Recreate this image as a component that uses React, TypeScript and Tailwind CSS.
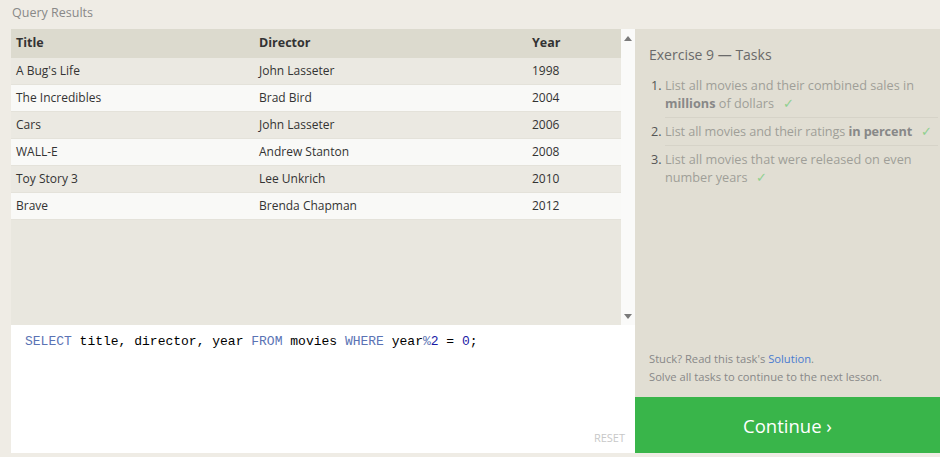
import React from "react";

const rows = [
  ["A Bug's Life", "John Lasseter", "1998"],
  ["The Incredibles", "Brad Bird", "2004"],
  ["Cars", "John Lasseter", "2006"],
  ["WALL-E", "Andrew Stanton", "2008"],
  ["Toy Story 3", "Lee Unkrich", "2010"],
  ["Brave", "Brenda Chapman", "2012"],
];

const Check = () => (
  <span className="inline-block ml-[9px] leading-[18px] text-[#8fd08f]">✓</span>
);

export default function App() {
  return (
    <div
      className="w-[940px] h-[457px] bg-[#efece5] flex flex-col overflow-hidden"
      style={{ fontFamily: '"Open Sans", "Noto Sans", sans-serif' }}
    >
      <div className="h-[29px] pl-[12px] pt-[4px] text-[12.5px] text-[#888] leading-[18px]">
        Query Results
      </div>
      <div className="flex h-[424px]">
        <div className="ml-[11px] w-[624px] flex flex-col">
          <div className="h-[296px] flex">
            <div className="w-[610px] bg-[#e9e7df]">
              <div className="flex h-[29px] items-center bg-[#dcdace] text-[12.5px] font-bold text-[#333]">
                <div className="w-[243px] pl-[5px]">Title</div>
                <div className="w-[273px] pl-[5px]">Director</div>
                <div className="flex-1 pl-[5px]">Year</div>
              </div>
              {rows.map((r, i) => (
                <div
                  key={i}
                  className={`flex h-[27px] items-center text-[12px] text-[#333] border-b border-[#e4e2da] ${
                    i % 2 === 0 ? "bg-[#ebe9e2]" : "bg-[#f9f9f7]"
                  }`}
                >
                  <div className="w-[243px] pl-[5px]">{r[0]}</div>
                  <div className="w-[273px] pl-[5px]">{r[1]}</div>
                  <div className="flex-1 pl-[5px]">{r[2]}</div>
                </div>
              ))}
            </div>
            <div className="w-[14px] bg-[#fafaf9] flex flex-col items-center justify-between pt-[7px] pb-[6px]">
              <svg width="8" height="5" viewBox="0 0 8 5">
                <polygon points="4,0 8,5 0,5" fill="#7a7a7a" />
              </svg>
              <svg width="8" height="5" viewBox="0 0 8 5">
                <polygon points="0,0 8,0 4,5" fill="#7a7a7a" />
              </svg>
            </div>
          </div>
          <div className="h-[128px] bg-white relative">
            <div
              className="pl-[14px] pt-[8px] text-[13px] leading-[18px] text-black"
              style={{ fontFamily: '"Liberation Mono", "DejaVu Sans Mono", monospace' }}
            >
              <span className="text-[#5a73b4]">SELECT</span> title, director, year{" "}
              <span className="text-[#5a73b4]">FROM</span> movies{" "}
              <span className="text-[#5a73b4]">WHERE</span> year
              <span className="text-[#5a73b4]">%</span>
              <span className="text-[#1a1aa6]">2</span> ={" "}
              <span className="text-[#1a1aa6]">0</span>;
            </div>
            <div className="absolute right-[10px] bottom-[7px] text-[11px] text-[#c8c8c8]">
              RESET
            </div>
          </div>
        </div>
        <div className="w-[305px] bg-[#e1ded3] flex flex-col">
          <div className="flex-1 pl-[14px] pr-[2px] pt-[15px]">
            <div className="text-[14px] text-[#6a6a6a] leading-[22px]">
              Exercise 9 — Tasks
            </div>
            <ol className="mt-[10px] text-[12.7px] leading-[18px] text-[#9f9e98]">
              <li className="flex">
                <span className="w-[16px] pl-[2px] text-[#555] shrink-0">1.</span>
                <div className="flex-1 pb-[5px] border-b border-[#d6d3c8]">
                  List all movies and their combined sales in{" "}
                  <b className="text-[#888]">millions</b> of dollars
                  <Check />
                </div>
              </li>
              <li className="flex pt-[4px]">
                <span className="w-[16px] pl-[2px] text-[#555] shrink-0">2.</span>
                <div className="flex-1 pb-[5px] border-b border-[#d6d3c8] whitespace-nowrap tracking-[-0.1px]">
                  List all movies and their ratings{" "}
                  <b className="text-[#888]">in percent</b>
                  <Check />
                </div>
              </li>
              <li className="flex pt-[4px]">
                <span className="w-[16px] pl-[2px] text-[#555] shrink-0">3.</span>
                <div className="flex-1 pb-[5px]">
                  List all movies that were released on even number years
                  <Check />
                </div>
              </li>
            </ol>
          </div>
          <div className="pl-[14px] pb-[11px] text-[11.2px] leading-[18px] text-[#888]">
            <div>
              Stuck? Read this task's <span className="text-[#4a7bd0]">Solution</span>.
            </div>
            <div>Solve all tasks to continue to the next lesson.</div>
          </div>
          <div className="h-[56px] bg-[#39b54a] flex items-center justify-center text-white text-[18.5px]">
            <span className="pt-[1px]">Continue ›</span>
          </div>
        </div>
      </div>
    </div>
  );
}
